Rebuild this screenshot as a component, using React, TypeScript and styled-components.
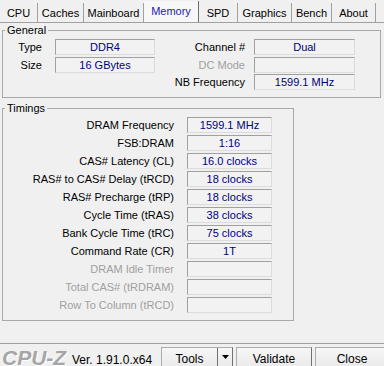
import React from 'react';
import styled, { createGlobalStyle } from 'styled-components';

const GlobalStyle = createGlobalStyle`
    html, body {
        margin: 0;
        padding: 0;
        background: #f0f0f0;
    }
    body {
        font-family: "Liberation Sans", Arial, sans-serif;
        font-size: 11px;
        color: #000;
    }
`;

const Window = styled.div`
    width: 384px;
    height: 366px;
    overflow: hidden;
    background: #f0f0f0;
    display: flex;
    flex-direction: column;
`;

const TabBar = styled.div`
    display: flex;
    flex-shrink: 0;
    height: 22px;
    align-items: flex-end;
`;

const Tab = styled.div<{ $w: number; $active?: boolean }>`
    width: ${(p) => p.$w}px;
    height: ${(p) => (p.$active ? 21 : 19)}px;
    box-sizing: border-box;
    display: flex;
    align-items: center;
    justify-content: center;
    padding-bottom: ${(p) => (p.$active ? 2 : 0)}px;
    border-right: 1px solid ${(p) => (p.$active ? '#6e6e6e' : '#a0a0a0')};
    background: ${(p) => (p.$active ? '#f7f7f7' : 'transparent')};
    color: ${(p) => (p.$active ? '#1c1cb0' : '#000')};
    white-space: nowrap;
`;

const Panel = styled.div`
    flex-shrink: 0;
    height: 322px;
    box-sizing: border-box;
    border-top: 1px solid #a0a0a0;
    border-bottom: 1px solid #a0a0a0;
    padding: 0 0 0 2px;
`;

const Group = styled.fieldset<{ $w: number; $gap?: number }>`
    width: ${(p) => p.$w}px;
    box-sizing: border-box;
    margin: ${(p) => p.$gap ?? 0}px 0 0 0;
    padding: 2px 0 7px 0;
    border: 1px solid #a8a8a8;
    min-width: 0;
`;

const Legend = styled.legend`
    padding: 0 2px;
    margin-left: 2px;
    line-height: 14px;
`;

const GeneralGrid = styled.div`
    display: grid;
    grid-template-columns: 52px 100px 99px 101px;
    grid-auto-rows: 16px;
    row-gap: 1.5px;
`;

const TimingsGrid = styled.div`
    display: grid;
    grid-template-columns: 184px 85px;
    grid-auto-rows: 16px;
    row-gap: 2px;
`;

const Label = styled.div<{ $pad: number; $dim?: boolean }>`
    text-align: right;
    padding-right: ${(p) => p.$pad}px;
    line-height: 16px;
    white-space: nowrap;
    color: ${(p) => (p.$dim ? '#a0a0a0' : '#000')};
`;

const Field = styled.div`
    box-sizing: border-box;
    height: 16px;
    border-top: 1px solid #a0a0a0;
    border-left: 1px solid #a0a0a0;
    border-bottom: 1px solid #dcdcdc;
    border-right: 1px solid #dcdcdc;
    background: #f2f2f2;
    color: #000080;
    text-align: center;
    line-height: 14px;
    white-space: nowrap;
`;

const Spacer = styled.div``;

const Footer = styled.div`
    display: flex;
    flex-shrink: 0;
    align-items: flex-start;
    padding-top: 3px;
`;

const Logo = styled.div`
    width: 66px;
    flex-shrink: 0;
    white-space: nowrap;
    font-family: "Liberation Sans", Arial, sans-serif;
    font-weight: bold;
    font-style: italic;
    font-size: 21px;
    line-height: 22px;
    color: #a6a6a6;
    margin-left: 2px;
    text-shadow: 1px 1px 0 #ffffff;
`;

const Version = styled.div`
    flex-shrink: 0;
    white-space: nowrap;
    font-size: 12px;
    margin: 6px 0 0 4px;
    width: 89px;
    line-height: 14px;
`;

const Button = styled.div<{ $w: number }>`
    flex-shrink: 0;
    width: ${(p) => p.$w}px;
    height: 24px;
    box-sizing: border-box;
    margin-right: 3px;
    border: 1px solid #acacac;
    border-right-color: #707070;
    border-bottom-color: #707070;
    background: linear-gradient(#f6f6f6, #e8e8e8);
    display: flex;
    align-items: flex-start;
    justify-content: center;
    padding-top: 4px;
    font-size: 12px;
`;

const SplitButton = styled.div`
    flex-shrink: 0;
    width: 72px;
    height: 24px;
    box-sizing: border-box;
    margin-right: 3px;
    border: 1px solid #acacac;
    border-right-color: #707070;
    border-bottom-color: #707070;
    background: linear-gradient(#f6f6f6, #e8e8e8);
    display: flex;
    font-size: 12px;
`;

const SplitMain = styled.div`
    width: 55px;
    border-right: 1px solid #707070;
    text-align: center;
    padding-top: 4px;
`;

const SplitArrow = styled.div`
    flex: 1;
    display: flex;
    justify-content: center;
    padding-top: 7px;
`;

const tabs = [
    { name: 'CPU', w: 38 },
    { name: 'Caches', w: 46 },
    { name: 'Mainboard', w: 60 },
    { name: 'Memory', w: 55, active: true },
    { name: 'SPD', w: 39 },
    { name: 'Graphics', w: 54 },
    { name: 'Bench', w: 40 },
    { name: 'About', w: 44 }
];

const timings: { label: string; value: string; dim?: boolean }[] = [
    { label: 'DRAM Frequency', value: '1599.1 MHz' },
    { label: 'FSB:DRAM', value: '1:16' },
    { label: 'CAS# Latency (CL)', value: '16.0 clocks' },
    { label: 'RAS# to CAS# Delay (tRCD)', value: '18 clocks' },
    { label: 'RAS# Precharge (tRP)', value: '18 clocks' },
    { label: 'Cycle Time (tRAS)', value: '38 clocks' },
    { label: 'Bank Cycle Time (tRC)', value: '75 clocks' },
    { label: 'Command Rate (CR)', value: '1T' },
    { label: 'DRAM Idle Timer', value: '', dim: true },
    { label: 'Total CAS# (tRDRAM)', value: '', dim: true },
    { label: 'Row To Column (tRCD)', value: '', dim: true }
];

const App: React.FC = () => (
    <Window>
        <GlobalStyle />
        <TabBar>
            {tabs.map((t) => (
                <Tab key={t.name} $w={t.w} $active={t.active}>
                    {t.name}
                </Tab>
            ))}
        </TabBar>
        <Panel>
            <Group $w={379}>
                <Legend>General</Legend>
                <GeneralGrid>
                    <Label $pad={13}>Type</Label>
                    <Field>DDR4</Field>
                    <Label $pad={9}>Channel #</Label>
                    <Field>Dual</Field>

                    <Label $pad={13}>Size</Label>
                    <Field>16 GBytes</Field>
                    <Label $pad={9} $dim>
                        DC Mode
                    </Label>
                    <Field />

                    <Spacer />
                    <Spacer />
                    <Label $pad={9}>NB Frequency</Label>
                    <Field>1599.1 MHz</Field>
                </GeneralGrid>
            </Group>
            <Group $w={292} $gap={3}>
                <Legend>Timings</Legend>
                <TimingsGrid>
                    {timings.map((t) => (
                        <React.Fragment key={t.label}>
                            <Label $pad={13} $dim={t.dim}>
                                {t.label}
                            </Label>
                            <Field>{t.value}</Field>
                        </React.Fragment>
                    ))}
                </TimingsGrid>
            </Group>
        </Panel>
        <Footer>
            <Logo>CPU-Z</Logo>
            <Version>Ver. 1.91.0.x64</Version>
            <SplitButton>
                <SplitMain>Tools</SplitMain>
                <SplitArrow>
                    <svg width="7" height="4" viewBox="0 0 7 4">
                        <path d="M0 0h7L3.5 4z" fill="#000" />
                    </svg>
                </SplitArrow>
            </SplitButton>
            <Button $w={76}>Validate</Button>
            <Button $w={74}>Close</Button>
        </Footer>
    </Window>
);

export default App;
